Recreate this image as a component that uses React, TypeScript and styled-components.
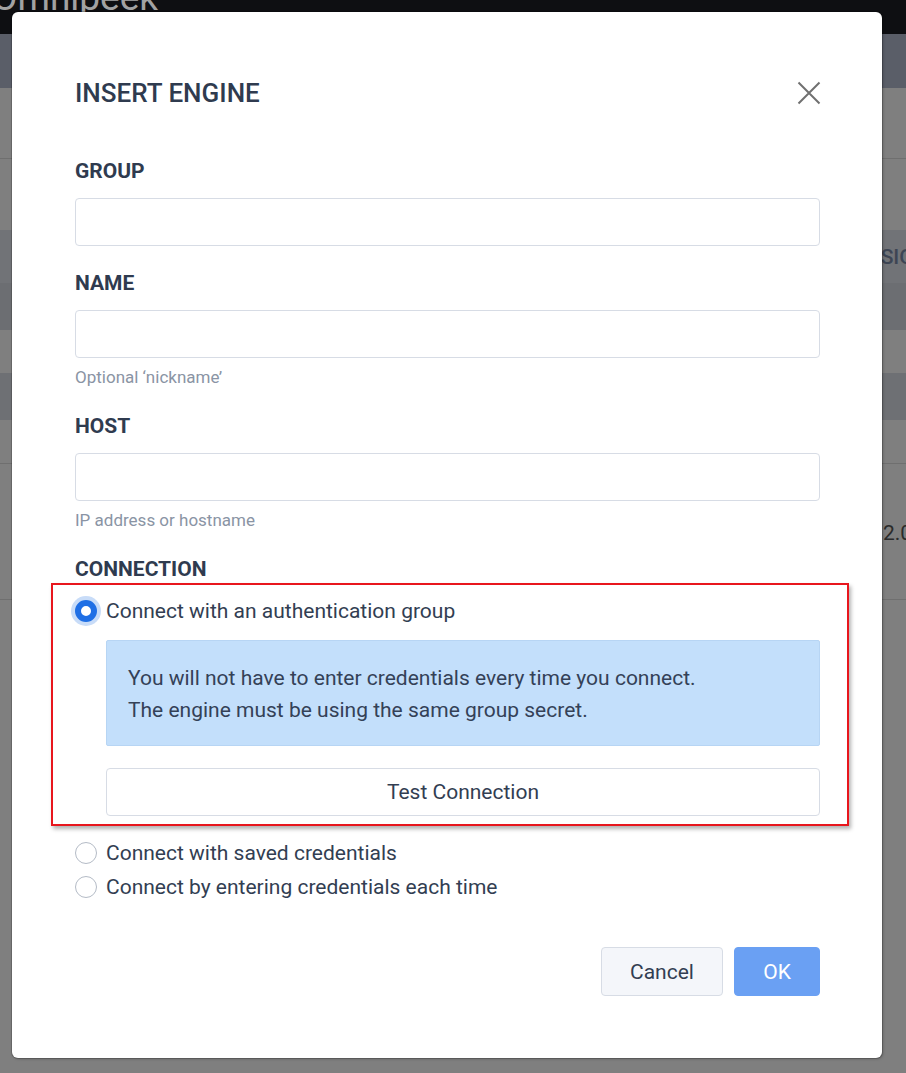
import React from "react";
import styled, { createGlobalStyle } from "styled-components";

const Global = createGlobalStyle`
  html, body { margin: 0; padding: 0; }
  body {
    background: #7f7f7f;
    font-family: Roboto, "Liberation Sans", Arial, sans-serif;
    overflow: hidden;
  }
  #root { width: 906px; height: 1073px; position: relative; overflow: hidden; }
`;

/* ---------- dimmed application behind the dialog ---------- */

const AppShell = styled.div`
  width: 906px;
  height: 1073px;
  display: flex;
  flex-direction: column;
  background: #7f7f7f;
`;

const TopBar = styled.header`
  height: 34px;
  background: #0e0f12;
  overflow: hidden;
  flex: none;
`;

const Logo = styled.div`
  margin-top: -20px;
  margin-left: -8px;
  font-size: 37px;
  line-height: 36px;
  color: #a2a2a2;
  font-weight: 400;
`;

const Toolbar = styled.div`
  height: 54px;
  background: #5a5e68;
  flex: none;
`;

const Band = styled.div<{ $h: number; $bg?: string; $line?: boolean }>`
  height: ${(p) => p.$h}px;
  background: ${(p) => p.$bg || "#7f7f7f"};
  border-bottom: ${(p) => (p.$line ? "1px solid #6f6f6f" : "none")};
  box-sizing: border-box;
  flex: none;
  display: flex;
  align-items: center;
  overflow: hidden;
  white-space: nowrap;
`;

const ColText = styled.span<{ $start: number; $weight?: number; $color?: string }>`
  margin-left: ${(p) => p.$start}px;
  font-size: 21px;
  font-weight: ${(p) => p.$weight || 400};
  color: ${(p) => p.$color || "#2b2b2b"};
`;

/* ---------- dialog ---------- */

const Dialog = styled.div`
  position: absolute;
  left: 12px;
  top: 12px;
  width: 870px;
  height: 1046px;
  box-sizing: border-box;
  background: #ffffff;
  border-radius: 6px;
  box-shadow: 0 0 0 1px rgba(0, 0, 0, 0.16), 1px 1px 3px rgba(0, 0, 0, 0.25);
  padding: 65px 62px 0 63px;
  display: flex;
  flex-direction: column;
  color: #323e52;
`;

const Header = styled.div`
  display: flex;
  align-items: center;
  justify-content: space-between;
  height: 32px;
`;

const Title = styled.h1`
  margin: 0;
  font-size: 26px;
  line-height: 32px;
  font-weight: 500;
  color: #2f3b4f;
`;

const CloseButton = styled.button`
  width: 24px;
  height: 24px;
  padding: 0;
  margin-right: -1px;
  border: none;
  background: transparent;
  display: flex;
  align-items: center;
  justify-content: center;
  cursor: pointer;
`;

const Field = styled.div<{ $first?: boolean }>`
  margin-top: ${(p) => (p.$first ? 50 : 25)}px;
  display: flex;
  flex-direction: column;
`;

const Label = styled.label`
  font-size: 21px;
  line-height: 24px;
  font-weight: 700;
  color: #2f3b4f;
`;

const Input = styled.input`
  margin-top: 15px;
  height: 48px;
  box-sizing: border-box;
  border: 1px solid #d7dce5;
  border-radius: 4px;
  padding: 0 14px;
  font-size: 20px;
  font-family: inherit;
  outline: none;
`;

const Helper = styled.div`
  margin-top: 7px;
  font-size: 17px;
  line-height: 24px;
  color: #8a94a4;
`;

const Highlight = styled.div`
  margin: 2px -29px 0 -24px;
  border: 2px solid #e8161d;
  box-shadow: 2px 3px 4px rgba(0, 0, 0, 0.3);
  padding: 9px 27px 8px 22px;
  display: flex;
  flex-direction: column;
`;

const RadioRow = styled.label`
  height: 34px;
  display: flex;
  align-items: center;
  gap: 9px;
  font-size: 21px;
  color: #323e52;
  cursor: pointer;
`;

const RadioDot = styled.span<{ $checked?: boolean }>`
  width: 22px;
  height: 22px;
  box-sizing: border-box;
  border-radius: 50%;
  flex: none;
  background: #ffffff;
  border: ${(p) => (p.$checked ? "6px solid #1f6fe5" : "1px solid #b4bbc6")};
  box-shadow: ${(p) => (p.$checked ? "0 0 0 4px #c8dcf8" : "none")};
`;

const Indented = styled.div`
  margin-left: 31px;
  display: flex;
  flex-direction: column;
`;

const InfoBox = styled.div`
  margin-top: 12px;
  background: #c3dffb;
  border: 1px solid #b7d5f4;
  border-radius: 2px;
  padding: 21px 21px 19px;
  font-size: 21px;
  line-height: 32px;
  color: #344157;
`;

const TestButton = styled.button`
  margin-top: 22px;
  height: 48px;
  background: #ffffff;
  border: 1px solid #d7dce5;
  border-radius: 4px;
  font-family: inherit;
  font-size: 21px;
  color: #323e52;
  cursor: pointer;
`;

const OtherOptions = styled.div`
  margin-top: 10px;
  display: flex;
  flex-direction: column;
`;

const Footer = styled.div`
  margin-top: 43px;
  display: flex;
  justify-content: flex-end;
  gap: 11px;
`;

const ActionButton = styled.button<{ $primary?: boolean }>`
  height: 49px;
  width: ${(p) => (p.$primary ? 86 : 122)}px;
  border-radius: 4px;
  border: 1px solid ${(p) => (p.$primary ? "#6aa0f3" : "#d7dce5")};
  background: ${(p) => (p.$primary ? "#6aa0f3" : "#f4f6fa")};
  color: ${(p) => (p.$primary ? "#ffffff" : "#323e52")};
  font-family: inherit;
  font-size: 21px;
  cursor: pointer;
`;

const CloseIcon = () => (
  <svg width="24" height="24" viewBox="0 0 24 24" fill="none">
    <path d="M1.5 1.5 L22.5 22.5 M22.5 1.5 L1.5 22.5" stroke="#707070" strokeWidth="2" />
  </svg>
);

export default function App() {
  return (
    <>
      <Global />
      <AppShell>
        <TopBar>
          <Logo>Omnipeek</Logo>
        </TopBar>
        <Toolbar />
        <Band $h={71} $line />
        <Band $h={71} />
        <Band $h={53} $bg="#717377">
          <ColText $start={842} $weight={500} $color="#3d4554">VERSION</ColText>
        </Band>
        <Band $h={47} $bg="#6c6e72" />
        <Band $h={43} />
        <Band $h={47} $bg="#6e7074" />
        <Band $h={44} $line />
        <Band $h={46} />
        <Band $h={45}>
          <ColText $start={883}>2.0</ColText>
        </Band>
        <Band $h={45} $line />
      </AppShell>

      <Dialog role="dialog" aria-label="Insert Engine">
        <Header>
          <Title>INSERT ENGINE</Title>
          <CloseButton aria-label="Close">
            <CloseIcon />
          </CloseButton>
        </Header>

        <Field $first>
          <Label>GROUP</Label>
          <Input />
        </Field>

        <Field>
          <Label>NAME</Label>
          <Input />
          <Helper>Optional ‘nickname’</Helper>
        </Field>

        <Field>
          <Label>HOST</Label>
          <Input />
          <Helper>IP address or hostname</Helper>
        </Field>

        <Field>
          <Label>CONNECTION</Label>
          <Highlight>
            <RadioRow>
              <RadioDot $checked />
              Connect with an authentication group
            </RadioRow>
            <Indented>
              <InfoBox>
                You will not have to enter credentials every time you connect.
                <br />
                The engine must be using the same group secret.
              </InfoBox>
              <TestButton>Test Connection</TestButton>
            </Indented>
          </Highlight>
          <OtherOptions>
            <RadioRow>
              <RadioDot />
              Connect with saved credentials
            </RadioRow>
            <RadioRow>
              <RadioDot />
              Connect by entering credentials each time
            </RadioRow>
          </OtherOptions>
        </Field>

        <Footer>
          <ActionButton>Cancel</ActionButton>
          <ActionButton $primary>OK</ActionButton>
        </Footer>
      </Dialog>
    </>
  );
}
